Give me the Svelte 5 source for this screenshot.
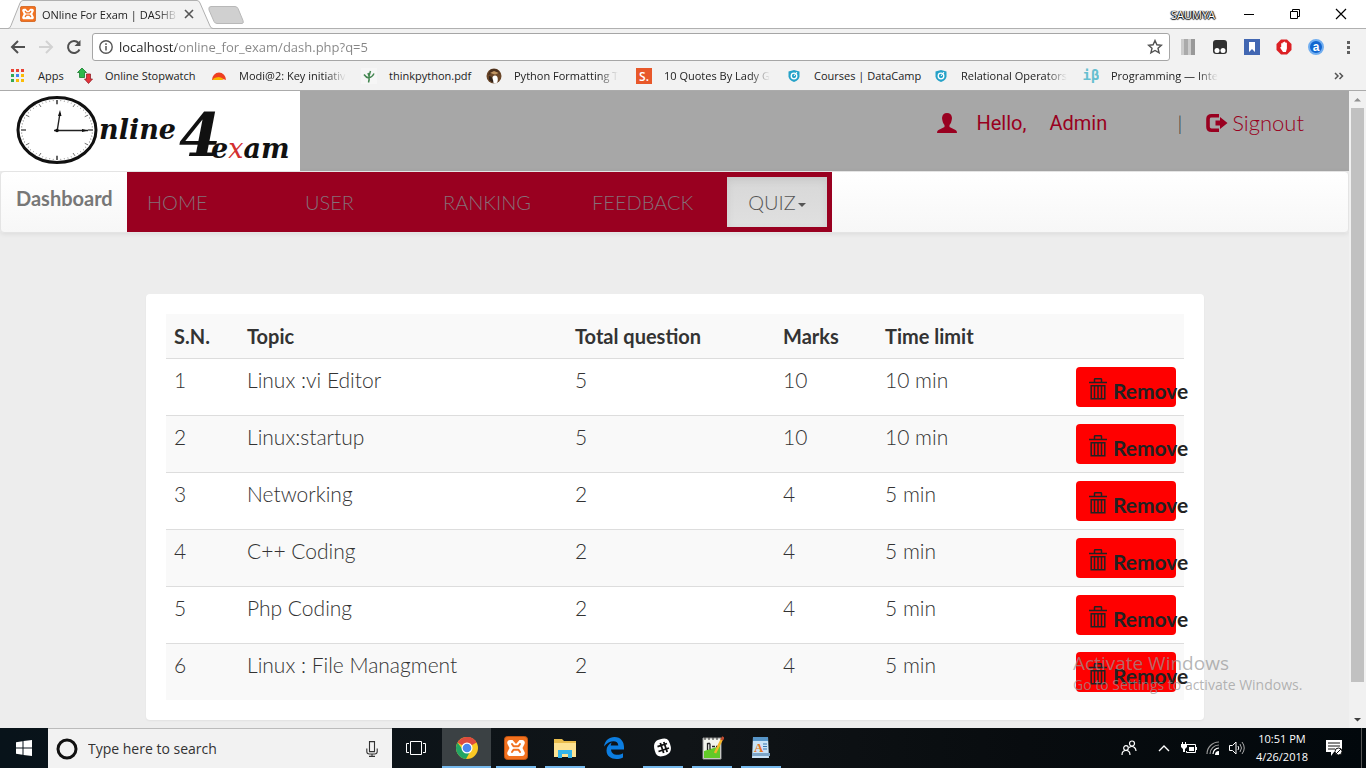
<script>
  const quizzes = [
    { topic: 'Linux :vi Editor', total: 5, marks: 10, time: 10 },
    { topic: 'Linux:startup', total: 5, marks: 10, time: 10 },
    { topic: 'Networking', total: 2, marks: 4, time: 5 },
    { topic: 'C++ Coding', total: 2, marks: 4, time: 5 },
    { topic: 'Php Coding', total: 2, marks: 4, time: 5 },
    { topic: 'Linux : File Managment', total: 2, marks: 4, time: 5 }
  ];
  const bookmarks = [
    { icon: 'apps', label: 'Apps' },
    { icon: 'arrows', label: 'Online Stopwatch' },
    { icon: 'sun', label: 'Modi@2: Key initiativ' },
    { icon: 'leaf', label: 'thinkpython.pdf' },
    { icon: 'owl', label: 'Python Formatting T' },
    { icon: 's', label: '10 Quotes By Lady G' },
    { icon: 'shield', label: 'Courses | DataCamp' },
    { icon: 'shield', label: 'Relational Operators' },
    { icon: 'beta', label: 'Programming — Inte' }
  ];
  const menu = ['HOME', 'USER', 'RANKING', 'FEEDBACK'];
  const tasks = ['chrome', 'xampp', 'explorer', 'edge', 'slack', 'notepad', 'wordpad'];
  const ticks = Array.from({ length: 60 }, (_, i) => i);
  let address = $state('localhost/online_for_exam/dash.php?q=5');
  let query = $state('');
</script>

{#snippet xampp()}
  <rect x="0.5" y="0.5" width="23" height="23" rx="3" fill="#f2711f" stroke="#c25410" />
  <path d="M6 4h2.5L12 8l3.500-4H18a2.800 2.800 0 0 1 2.500 4L18.500 12l2 4a2.800 2.800 0 0 1-2.500 4H6a2.800 2.800 0 0 1-2.500-4l2-4-2-4A2.800 2.800 0 0 1 6 4z" fill="#fff" />
  <path d="M8 8l1.500 2.200h5L16 8M8 16l1.500-2.200h5L16 16" fill="none" stroke="#f2711f" stroke-width="2" stroke-linejoin="round" stroke-linecap="round" />
{/snippet}

<div class="screen">
  <div class="tabs">
    <svg class="tabshape" viewBox="0 0 212 29" aria-hidden="true">
      <path d="M0 28.500h4q2 0 3-3L16 3q1-2.500 3-2.500h174q2 0 3 2.500l10 23q1 2.500 3 2.500" fill="#f2f2f2" stroke="#b0b0b0" />
    </svg>
    <div class="tab">
      <svg width="16" height="16" viewBox="0 0 24 24" aria-hidden="true">{@render xampp()}</svg>
      <span class="title fade">ONline For Exam | DASHB</span>
      <button class="plain" aria-label="Close tab">
        <svg width="10" height="10" viewBox="0 0 10 10"><path d="M1 1l8 8M9 1l-8 8" stroke="#555" stroke-width="1.600" /></svg>
      </button>
    </div>
    <button class="plain newtab" aria-label="New tab">
      <svg width="36" height="18" viewBox="0 0 36 18"><path d="M3 .5h24q2 0 3 2l5 12q1 3-1 3H9q-2 0-3-2L1 4Q0 .5 3 .5z" fill="#d0d0d0" stroke="#b8b8b8" /></svg>
    </button>
    <span class="user">SAUMYA</span>
    <div class="winbtns">
      <button class="plain" aria-label="Minimize"><svg width="12" height="12" viewBox="0 0 12 12"><path d="M1 6.500h10" stroke="#000" /></svg></button>
      <button class="plain" aria-label="Restore"><svg width="12" height="12" viewBox="0 0 12 12"><path d="M1.500 3.500h7v7h-7zM3.500 3V1.500h7v7H9" fill="none" stroke="#000" /></svg></button>
      <button class="plain" aria-label="Close"><svg width="12" height="12" viewBox="0 0 12 12"><path d="M1 1l10 10M11 1L1 11" stroke="#000" stroke-width="1.200" /></svg></button>
    </div>
  </div>

  <div class="toolbar">
    <button class="plain" aria-label="Back"><svg width="16" height="16" viewBox="0 0 16 16"><path d="M15 8H2M8 2L2 8l6 6" fill="none" stroke="#505050" stroke-width="2" /></svg></button>
    <button class="plain" aria-label="Forward"><svg width="16" height="16" viewBox="0 0 16 16"><path d="M1 8h13M8 2l6 6-6 6" fill="none" stroke="#d2d2d2" stroke-width="2" /></svg></button>
    <button class="plain" aria-label="Reload"><svg width="16" height="16" viewBox="0 0 16 16"><path d="M13.500 10.500A6 6 0 1 1 12.500 4" fill="none" stroke="#505050" stroke-width="2" /><path d="M14.500 1v6H8.500z" fill="#505050" /></svg></button>
    <div class="omnibox">
      <svg width="14" height="14" viewBox="0 0 14 14" aria-hidden="true"><circle cx="7" cy="7" r="6.200" fill="none" stroke="#555" stroke-width="1.400" /><path d="M7 6v4.500M7 3.300v1.600" stroke="#555" stroke-width="1.500" /></svg>
      <input aria-label="Address" bind:value={address} />
      <button class="plain" aria-label="Bookmark this page"><svg width="16" height="16" viewBox="0 0 16 16"><path d="M8 1.500l1.900 4.300 4.600.4-3.500 3.100 1.100 4.600L8 11.500l-4.100 2.400L5 9.300 1.500 6.200l4.600-.4z" fill="none" stroke="#505050" stroke-width="1.400" /></svg></button>
    </div>
    <div class="extensions">
      <button class="plain" aria-label="Reader"><svg width="16" height="16" viewBox="0 0 16 16"><path d="M1 0h3v16H1z" fill="#ccc" /><path d="M4 0h4v16H4z" fill="#aaa" /><path d="M8 0h3v16H8z" fill="#ccc" /><path d="M11 0h4v16h-4z" fill="#999" /></svg></button>
      <button class="plain" aria-label="Scripts"><svg width="16" height="16" viewBox="0 0 16 16"><rect x="1" y="1" width="14" height="14" rx="3" fill="#303030" /><circle cx="5" cy="11.500" r="2.500" fill="#fff" /><circle cx="11" cy="11.500" r="2.500" fill="#fff" /></svg></button>
      <button class="plain" aria-label="Saved"><svg width="16" height="16" viewBox="0 0 16 16"><path d="M0 0h16v16H0z" fill="#4267b2" /><path d="M5 3h6v10l-3-3-3 3z" fill="#fff" /></svg></button>
      <button class="plain" aria-label="Blocker"><svg width="16" height="16" viewBox="0 0 16 16"><path d="M5 .5h6L15.500 5v6L11 15.500H5L.5 11V5z" fill="#dc2024" /><path d="M4 8.500l1.200-.5V4.500q.8-1 1.400 0V3.500q.7-1 1.400 0V3q.7-1 1.400 0v1q.8-1 1.500 0v5.500l-1 3.500H7z" fill="#fff" /></svg></button>
      <button class="plain" aria-label="Search assistant"><svg width="16" height="16" viewBox="0 0 16 16"><circle cx="8" cy="8" r="7" fill="#1266d0" stroke="#71aef0" stroke-width="2" /><text x="8" y="12" text-anchor="middle" fill="#fff" font-family="Liberation Sans" font-weight="700" font-size="12">a</text></svg></button>
      <button class="plain" aria-label="Menu"><svg width="16" height="16" viewBox="0 0 16 16"><path d="M7 2h3v3H7zM7 7h3v3H7zM7 12h3v3H7z" fill="#606060" /></svg></button>
    </div>
  </div>

  <nav class="bookmarks" aria-label="Bookmarks">
    {#each bookmarks as b}
      <a href="#bookmark">
        <svg width="16" height="16" viewBox="0 0 16 16" aria-hidden="true">
          {#if b.icon === 'apps'}
            <path d="M1 1h3v3H1zM6 1h3v3H6zM11 1h3v3h-3z" fill="#ea4335" />
            <path d="M1 6h3v3H1zM1 11h3v3H1z" fill="#34a853" /><path d="M6 6h3v3H6z" fill="#4285f4" /><path d="M11 6h3v3h-3zM6 11h3v3H6zM11 11h3v3h-3z" fill="#fbbc05" />
          {:else if b.icon === 'arrows'}
            <path d="M5 0l4.500 4.500H7.500v5h-5v-5H.5z" fill="#2eb84b" stroke="#187a2c" stroke-width=".8" /><path d="M11.500 15.500L7.500 11h2V6h4v5h2z" fill="#e4333c" stroke="#96222a" stroke-width=".8" />
          {:else if b.icon === 'sun'}
            <path d="M1 12a7 7.500 0 0 1 14 0q-2-1-4-.5h-6z" fill="#ee3f22" /><path d="M1.500 12a6.500 5 0 0 1 11-1L11 12z" fill="#f8b600" />
          {:else if b.icon === 'leaf'}
            <path d="M0 0h16v16H0z" fill="#fff" fill-opacity=".3" /><path d="M7.500 14.500q1-3 .5-6.500L7 5M8 9.500q3 0 5-4M8 8l1.500-5M7.800 10Q5 9.500 3 6.500" fill="none" stroke="#438650" stroke-width="1.500" />
          {:else if b.icon === 'owl'}
            <circle cx="8" cy="8" r="7.500" fill="#6a4628" /><path d="M4 2q4-2 8 0l2 4-6-1-6 2z" fill="#4a2f1d" /><ellipse cx="9" cy="11.500" rx="2.800" ry="4" fill="#fff" /><path d="M4 5l4-2 5 2-4 1.500z" fill="#c19562" /><path d="M3 8q4 0 4.500 7L3 12z" fill="#33251c" />
          {:else if b.icon === 's'}
            <path d="M0 0h16v16H0z" fill="#e8582a" /><text x="8" y="13" text-anchor="middle" fill="#fff" font-family="Open Sans" font-weight="600" font-size="12">S.</text>
          {:else if b.icon === 'shield'}
            <path d="M8 2l5.500 1.500v5Q13 12 8 14 3 12 2.500 8.500v-5z" fill="#26a2c8" /><circle cx="8" cy="8" r="2.800" fill="none" stroke="#fff" stroke-width="1.300" /><path d="M8 8l3-4" stroke="#fff" />
          {:else}
            <text x="8" y="12" text-anchor="middle" fill="#66bfd0" font-family="DejaVu Sans Mono" font-weight="700" font-size="14">iβ</text>
          {/if}
        </svg>
        <span class="fade">{b.label}</span>
      </a>
    {/each}
    <button class="plain more" aria-label="More bookmarks"><svg width="10" height="8" viewBox="0 0 10 8"><path d="M1 1l3 3-3 3M5.500 1l3 3-3 3" fill="none" stroke="#555" stroke-width="1.500" /></svg></button>
  </nav>

  <div class="viewport">
    <div class="page">
      <header>
        <svg class="logo" viewBox="0 0 300 80" role="img" aria-label="Online 4 exam">
          <path d="M0 0h300v80H0z" fill="#fff" />
          <ellipse cx="57" cy="39" rx="39" ry="32.500" fill="none" stroke="#111" stroke-width="3" />
          <g transform="translate(57 39) scale(1 .83)">
            {#each ticks as t}
              <path d={t % 15 === 0 ? 'M0 -36V-31' : t % 5 === 0 ? 'M0 -36V-32' : 'M0 -36V-35'} transform="rotate({t * 6})" stroke="#333" stroke-width={t % 15 === 0 ? 1.5 : 0.7} />
            {/each}
          </g>
          <path d="M57 41l3-19M54 39.500h34" stroke="#222" stroke-width="1.400" /><path d="M58 25l2-6 1.500 6zM82 38l6 1.500-6 1.500z" fill="#111" /><circle cx="57" cy="39.500" r="1.800" fill="#111" />
          <text x="99" y="48" font-family="DejaVu Serif" font-style="italic" font-weight="700" font-size="27" fill="#111">nline</text>
          <text x="179" y="65" font-family="DejaVu Serif" font-style="italic" font-weight="700" font-size="60" fill="#111">4</text>
          <text x="211" y="67" font-family="DejaVu Serif" font-style="italic" font-weight="700" font-size="27" fill="#111">e<tspan fill="#d32f2f" font-weight="400">x</tspan>am</text>
        </svg>
        <div class="account">
          <a class="who" href="#account">
            <svg width="20" height="20" viewBox="0 0 20 20" aria-hidden="true"><path d="M10 0q4.500 0 5 5-.5 5-2.500 7v2l6 3q1.500.7 1.500 3H0q0-2.300 1.500-3l6-3v-2Q5.500 10 5 5q.5-5 5-5z" fill="#990020" /></svg>
            <span class="hello">Hello,</span><span class="name">Admin</span>
          </a>
          <span class="bar">|</span>
          <a class="out" href="#signout">
            <svg width="22" height="18" viewBox="0 0 22 18" aria-hidden="true"><path d="M13 1.800H5.500Q2 1.800 2 5v8q0 3.200 3.500 3.200H13" fill="none" stroke="#990020" stroke-width="3.600" /><path d="M9.500 6.500H14V3l7.500 6L14 15v-3.500H9.500z" fill="#990020" /></svg>Signout
          </a>
        </div>
      </header>

      <nav class="mainnav" aria-label="Main">
        <a class="brand" href="#dashboard">Dashboard</a>
        <ul>
          {#each menu as item}<li><a href="#{item.toLowerCase()}">{item}</a></li>{/each}
          <li><button class="quiz">QUIZ<i></i></button></li>
        </ul>
      </nav>

      <main>
        <div class="card">
          <table>
            <colgroup><col class="c-sn" /><col /><col class="c-total" /><col class="c-marks" /><col class="c-time" /><col class="c-act" /></colgroup>
            <thead><tr><th>S.N.</th><th>Topic</th><th>Total question</th><th>Marks</th><th>Time limit</th><th aria-label="Action"></th></tr></thead>
            <tbody>
              {#each quizzes as q, i}
                <tr>
                  <td>{i + 1}</td><td>{q.topic}</td><td>{q.total}</td><td>{q.marks}</td><td>{q.time} min</td>
                  <td>
                    <button class="remove">
                      <svg width="18" height="22" viewBox="0 0 18 22" aria-hidden="true"><path d="M0 4.500h18M5.500 4V1.500q0-.8.800-.8h5.400q.8 0 .8.800V4M2.200 7.700h13.600v13H2.200zM5.500 8v12M9 8v12M12.500 8v12" fill="none" stroke="#222" stroke-width="1.500" /></svg>
                      <span>Remove</span>
                    </button>
                  </td>
                </tr>
              {/each}
            </tbody>
          </table>
        </div>
      </main>
    </div>
    <div class="scroll" aria-hidden="true">
      <svg width="17" height="17" viewBox="0 0 17 17"><path d="M5 10.500L8.500 7l3.500 3.500z" fill="#909090" /></svg>
      <div class="thumb"></div>
      <svg width="17" height="17" viewBox="0 0 17 17"><path d="M5 7l3.500 3.500L12 7z" fill="#404040" /></svg>
    </div>
    <div class="watermark"><p>Activate Windows</p><small>Go to Settings to activate Windows.</small></div>
  </div>

  <footer>
    <button class="start" aria-label="Start"><svg width="16" height="16" viewBox="0 0 16 16"><path d="M0 2.200l6.500-.9v6.200H0zM7.500 1.100L16 0v7.500H7.500zM0 8.500h6.500v6.200L0 13.800zM7.500 8.500H16V16l-8.500-1.100z" fill="#fff" /></svg></button>
    <label class="search">
      <svg width="22" height="22" viewBox="0 0 22 22" aria-hidden="true"><circle cx="11" cy="11" r="9" fill="none" stroke="#111" stroke-width="3" /></svg>
      <input placeholder="Type here to search" aria-label="Search" bind:value={query} />
      <svg width="12" height="16" viewBox="0 0 12 16" aria-hidden="true"><path d="M3.500.6h5v10h-5zM.8 7.500v3q0 2.500 2.500 2.500h5.400q2.500 0 2.500-2.500v-3M6 13v2.400M3 15.400h6" fill="none" stroke="#333" stroke-width="1.100" /></svg>
    </label>
    <button class="view" aria-label="Task view"><svg width="20" height="14" viewBox="0 0 20 14"><path d="M4.500.5h11v13h-11zM3 2.500H.5v9H3M17 2.500h2.500v9H17" fill="none" stroke="#fff" /></svg></button>
    <div class="tasks">
      {#each tasks as t}
        <button class="task {t}" aria-label={t}>
          <svg width="24" height="24" viewBox="0 0 24 24">
            {#if t === 'chrome'}
              <circle cx="12" cy="12" r="11" fill="#fbc924" /><path d="M12 12L2.500 6.500A11 11 0 0 1 21.500 6.500z" fill="#dd4b3e" /><path d="M12 1a11 11 0 0 1 9.500 5.500H12z" fill="#dd4b3e" /><path d="M2.500 6.500A11 11 0 0 0 11 23l5-9-4-2-4 2z" fill="#22a565" /><circle cx="12" cy="12" r="5.500" fill="#fff" /><circle cx="12" cy="12" r="4.300" fill="#4a87ee" />
            {:else if t === 'xampp'}{@render xampp()}
            {:else if t === 'explorer'}
              <path d="M1 3h8l2 2h12v16H1z" fill="#e9bd4d" /><path d="M1 7h22v14H1z" fill="#fde292" /><path d="M5 22v-8h14v8h-4v-4H9v4z" fill="#35b5e9" />
            {:else if t === 'edge'}
              <path d="M2 10.500C3 4.500 7 1 12.500 1 19 1 22 6 22 11v2.500H9c.4 6 7.500 6.500 12 3.700v4.200C14 25 4.500 22.500 4.500 14.500c0-3.800 2.300-6.500 5.300-8-.5.800-1 1.800-1.100 3h7.600C16.300 3.300 7 3.800 2 10.500z" fill="#0c7de0" />
            {:else if t === 'slack'}
              <path d="M8.500 3.500q7-2.500 9 1 3.500 7 2 10.500t-7 5Q7 21.500 5 18 2 11 3.500 7.500T8.500 3.500z" fill="#fff" /><path d="M9.300 7l3.400 10M12.800 6l3.400 10M6.500 10.700L16 7.500M7.500 15.500L18 12" stroke="#111" stroke-width="1.800" />
            {:else if t === 'notepad'}
              <path d="M3 2h18v21H3z" fill="#f3f5ee" stroke="#999" /><path d="M4 15l16-5v12H4z" fill="#62ca28" /><path d="M7.500 7v7M10 7.500v6M7.500 7.500H10M12 10.500h3M16 10.500h3" fill="none" stroke="#222" stroke-width="1.300" /><path d="M5 1v3M9 1v3M13 1v3M17 1v3" stroke="#333" /><path d="M22 3L15 17" stroke="#f4b62b" stroke-width="2.500" /><path d="M23.500 1l-2 3" stroke="#bd4b30" stroke-width="3" />
            {:else}
              <path d="M4 1h15l1 21H3z" fill="#cae3f7" /><path d="M4 1h15v4H4z" fill="#5795c8" /><path d="M3 17h18v3H3z" fill="#7da5c8" /><text x="5" y="16" fill="#e67520" font-family="Liberation Serif" font-weight="700" font-size="13">A</text><path d="M14 8h4M14 10.500h4M14 13h4" stroke="#3875af" />
            {/if}
          </svg>
        </button>
      {/each}
    </div>
    <div class="tray">
      <svg width="16" height="16" viewBox="0 0 16 16" aria-hidden="true"><g fill="none" stroke="#fff" stroke-width="1.200"><circle cx="11" cy="3.500" r="2.500" /><circle cx="5" cy="8" r="2.300" /><path d="M1 15q0-4.500 4-4.500T9 15M8 7.500q3-2 5.500 0Q15 9 15 11" /></g></svg>
      <svg class="up" width="12" height="8" viewBox="0 0 12 8" aria-hidden="true"><path d="M1 7l5-5 5 5" fill="none" stroke="#fff" stroke-width="1.400" /></svg>
      <svg width="16" height="12" viewBox="0 0 16 12" aria-hidden="true"><path d="M6 2.500h8.500v8H5.500V9M15.500 5v3" fill="none" stroke="#fff" /><path d="M8 5h5v4H8zM0 2h6v3L4 7v3H2V7L0 5zM1 0h1v2H1zM4 0h1v2H4z" fill="#fff" /></svg>
      <svg width="14" height="14" viewBox="0 0 14 14" aria-hidden="true"><g fill="none" stroke="#999" stroke-width="1.200"><path d="M1 13A12 12 0 0 1 13 1M4 13a9 9 0 0 1 9-9" /><path d="M7 13a6 6 0 0 1 6-6" stroke="#fff" /></g><path d="M13 10v4h-4q0-4 4-4z" fill="#fff" /></svg>
      <svg width="16" height="14" viewBox="0 0 16 14" aria-hidden="true"><path d="M.5 4.500h3l3.500-3.500v12L3.500 9.500h-3zM9 5q1.500 2 0 4" fill="none" stroke="#fff" /><path d="M11 3q3 4 0 8M13 1q4.500 6 0 12" fill="none" stroke="#aaa" /></svg>
      <div class="clock"><span>10:51 PM</span><span>4/26/2018</span></div>
      <svg width="18" height="18" viewBox="0 0 18 18" aria-hidden="true"><path d="M1 1h16v12H9l-3 4v-4H1z" fill="#fff" /><path d="M3 4h12M3 7h12M3 10h7" stroke="#111" /><circle cx="13.500" cy="12.500" r="3.500" fill="#fff" stroke="#111" /><path d="M11 15l5-5" stroke="#111" /></svg>
      <span class="peek"></span>
    </div>
  </footer>
</div>

<style>
  :global(body) { margin: 0; }
  * { box-sizing: border-box; }
  a { text-decoration: none; color: inherit; }
  button, input { font: inherit; color: inherit; }
  svg { flex: none; display: block; }
  .screen { display: flex; flex-direction: column; height: 100vh; overflow: hidden; font: 12px "Open Sans", sans-serif; color: #222; }
  .plain { border: 0; background: none; padding: 0; display: flex; align-items: center; justify-content: center; }
  .fade { white-space: nowrap; overflow: hidden; mask-image: linear-gradient(90deg, #000 calc(100% - 20px), transparent); }

  .tabs { position: relative; display: flex; align-items: center; height: 29px; background: #fff; border-bottom: 1px solid #b0b0b0; }
  .tabshape { position: absolute; left: 4px; top: 0; width: 212px; height: 29px; }
  .tab { position: relative; display: flex; align-items: center; width: 208px; padding-left: 20px; }
  .title { width: 136px; margin: 0 6px; font-size: 11px; }
  .newtab { margin-top: 2px; }
  .user { margin-left: auto; margin-right: 28px; font-size: 11px; color: #fff; text-shadow: 0 0 1px #000, 1px 0 1px #000, -1px 0 1px #000, 0 1px 1px #000; }
  .winbtns { display: flex; gap: 34px; padding-right: 19px; }

  .toolbar { display: flex; align-items: center; gap: 12px; height: 36px; padding: 0 10px; background: #f2f2f2; }
  .omnibox { flex: 1; display: flex; align-items: center; gap: 6px; height: 28px; margin: 0 -2px; padding: 0 6px; background: #fff; border: 1px solid #a6a6a6; border-radius: 3px; }
  .omnibox input { flex: 1; min-width: 0; border: 0; outline: 0; padding: 0; font-size: 13px; color: transparent; background: linear-gradient(90deg, #222 57px, #858585 57px); background-clip: text; }
  .extensions { display: flex; gap: 16px; }

  .bookmarks { display: grid; grid-template-columns: 67px 134px 150px 125px 150px 150px 147px 150px 150px 1fr; align-items: start; height: 26px; padding: 1px 22px 0 10px; background: #f2f2f2; border-bottom: 1px solid #ababab; }
  .bookmarks a { display: flex; align-items: center; gap: 12px; min-width: 0; padding-right: 12px; font-size: 11px; line-height: 20px; }
  .bookmarks a:first-child .fade, .bookmarks a:nth-child(2) .fade, .bookmarks a:nth-child(4) .fade, .bookmarks a:nth-child(7) .fade { mask-image: none; overflow: visible; }
  .more { justify-self: end; height: 20px; }

  .viewport { position: relative; flex: 1; min-height: 0; display: flex; background: #ededed; }
  .page { flex: 1; min-width: 0; overflow: hidden; font: 20px/28px "Century Gothic", Lato, sans-serif; font-weight: 300; color: #333; }
  header { display: flex; justify-content: space-between; height: 80px; background: #a7a7a7; }
  .logo { width: 300px; height: 80px; }
  .account { display: flex; align-items: flex-start; padding: 18px 45px 0 0; color: #990020; }
  .who { display: flex; align-items: center; font-family: Roboto, sans-serif; font-weight: 400; }
  .hello { width: 73px; margin-left: 19px; }
  .name { width: 58px; }
  .bar { margin: 0 24px 0 70px; color: #333; }
  .out { display: flex; align-items: center; gap: 4px; font-size: 22px; }

  .mainnav { display: flex; height: 62px; border: 1px solid #e4e4e4; border-radius: 4px; background: linear-gradient(#fff, #f7f7f7); box-shadow: 0 1px 5px rgba(0, 0, 0, 0.08); }
  .brand { width: 126px; padding: 12px 0 0 15px; font-weight: 700; color: #777; }
  ul { display: grid; grid-template-columns: 158px 138px 149px 155px 100px; margin: 0; padding: 5px 5px 5px 0; list-style: none; background: #990020; }
  li { color: #857078; font-weight: 400; }
  li a { display: block; padding: 11px 0 0 20px; font-weight: 300; }
  .quiz { width: 100%; height: 50px; border: 0; background: linear-gradient(#d7d7d7, #e0e0e0); box-shadow: inset 0 3px 9px rgba(0, 0, 0, 0.08); color: #555; font-weight: 300; }
  .quiz i { display: inline-block; margin-left: 2px; vertical-align: middle; border: 4px solid transparent; border-top-color: #555; border-bottom: 0; }

  main { padding: 61px 145px 0 146px; }
  .card { padding: 20px; background: #fff; border-radius: 4px; box-shadow: 0 1px 2px rgba(0, 0, 0, 0.05); }
  table { width: 100%; table-layout: fixed; border-collapse: separate; border-spacing: 0; }
  .c-sn { width: 73px; } .c-total { width: 208px; } .c-marks { width: 102px; } .c-time { width: 191px; } .c-act { width: 116px; }
  th, td { padding: 8px; text-align: left; vertical-align: top; white-space: nowrap; }
  th { font-weight: 700; }
  td { border-top: 1px solid #ddd; font-size: 21px; line-height: 26px; }
  thead tr, tbody tr:nth-child(even) { background: #f9f9f9; }
  .remove { display: flex; align-items: center; gap: 6px; width: 100px; height: 40px; padding: 8px 0 0 13px; border: 0; border-radius: 4px; background: #f00; color: #222; font-weight: 700; }
  .remove svg { margin-bottom: 4px; }

  .scroll { width: 17px; display: flex; flex-direction: column; background: #f1f1f1; }
  .thumb { flex: 1; margin: 0 2px 29px; background: #c1c1c1; }
  .watermark { position: absolute; right: 56px; bottom: 33px; width: 237px; color: rgba(150, 150, 150, 0.7); pointer-events: none; white-space: nowrap; }
  .watermark p { margin: 0; font-size: 19px; line-height: 24px; }
  .watermark small { display: block; font-size: 14px; line-height: 20px; }

  footer { display: flex; height: 40px; background: linear-gradient(90deg, #08131a, #101417 50%, #080c0f 75%, #02080c); color: #fff; }
  footer button { border: 0; padding: 0; background: none; display: flex; align-items: center; justify-content: center; }
  .start { width: 48px; }
  .search { display: flex; align-items: center; gap: 10px; width: 344px; padding: 0 14px 0 8px; background: #f2f2f2; border-top: 1px solid #bbb; color: #333; }
  .search input { flex: 1; min-width: 0; border: 0; padding: 0; background: none; font-size: 14px; }
  .search input::placeholder { color: #333; opacity: 1; }
  .view { width: 48px; }
  .tasks { display: flex; padding-left: 2px; }
  footer .task { width: 49px; background: linear-gradient(#76b9ed, #76b9ed) center bottom / 40px 2px no-repeat; }
  footer .chrome { background: linear-gradient(#76b9ed, #76b9ed) center bottom / 100% 2px no-repeat #3b4144; }
  footer .edge { background: none; }
  .tray { display: flex; align-items: center; margin-left: auto; gap: 9px; }
  .up { margin: 0 2px 0 12px; }
  .clock { display: flex; flex-direction: column; width: 66px; text-align: center; font-size: 11px; line-height: 18px; margin-left: -5px; }
  .tray .clock + svg { margin-left: 1px; }
  .peek { width: 1px; height: 40px; margin: 0 4px 0 9px; background: #555; }
</style>
